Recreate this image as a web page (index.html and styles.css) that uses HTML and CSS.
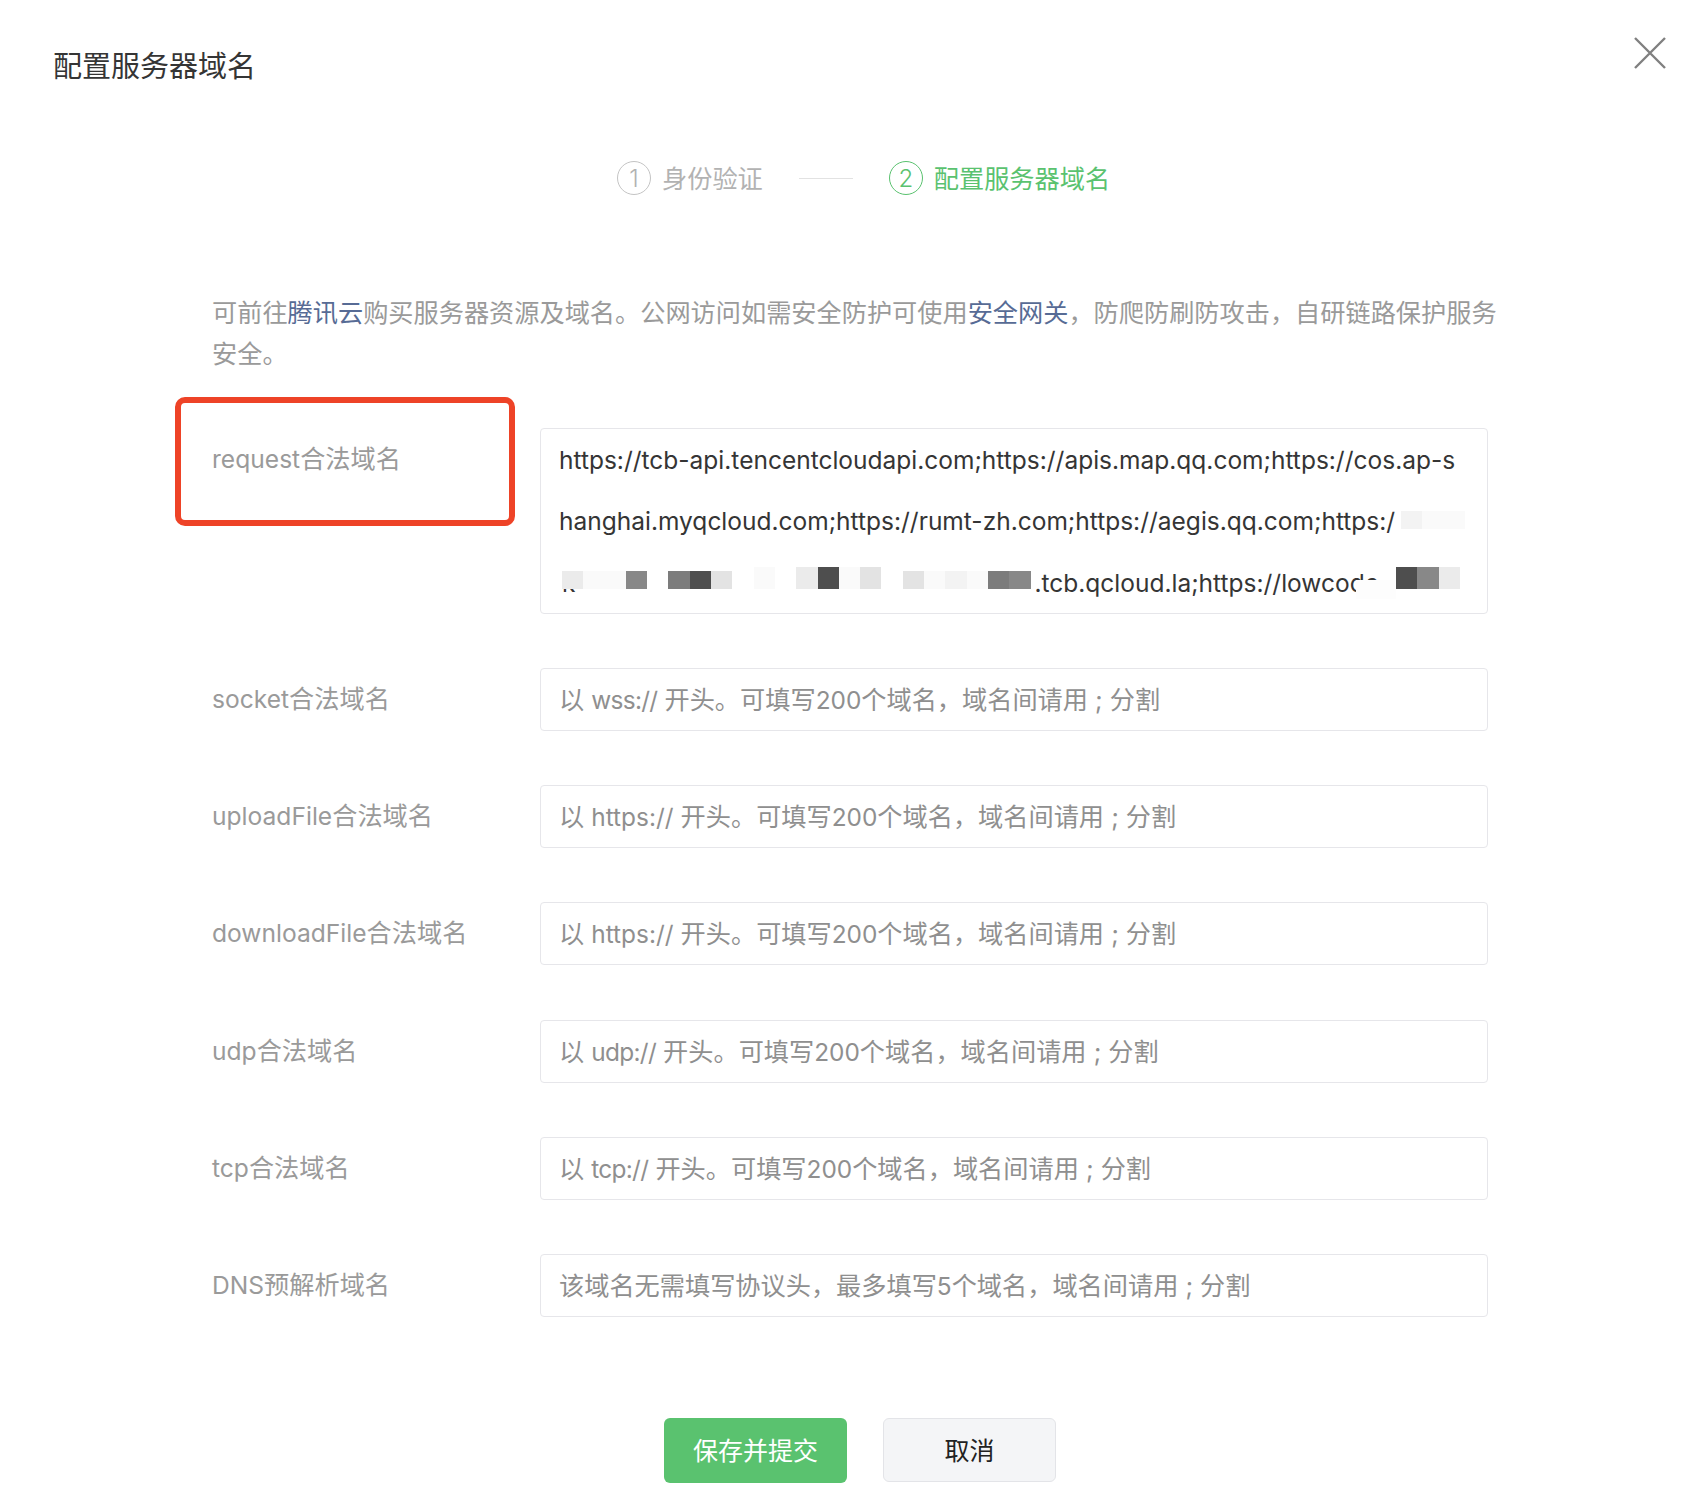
FILE: index.html
```html
<!DOCTYPE html>
<html lang="zh-CN">
<head>
  <meta charset="UTF-8">
  <title>配置服务器域名</title>
  <link rel="stylesheet" href="styles.css">
</head>
<body>
  <div class="dialog">
    <div class="dialog-header">
      <h1>配置服务器域名</h1>
      <svg class="close-icon" viewBox="0 0 32 32">
        <path d="M1 1 L31 31 M31 1 L1 31"></path>
      </svg>
    </div>

    <div class="steps">
      <div class="step">
        <span class="step-num">1</span>
        <span class="step-label">身份验证</span>
      </div>
      <span class="step-line"></span>
      <div class="step step-active">
        <span class="step-num">2</span>
        <span class="step-label">配置服务器域名</span>
      </div>
    </div>

    <p class="desc">可前往<a href="#">腾讯云</a>购买服务器资源及域名。公网访问如需安全防护可使用<a href="#">安全网关</a>，防爬防刷防攻击，自研链路保护服务安全。</p>

    <div class="form">
      <div class="form-row">
        <label class="form-label"><span class="lat">request</span>合法域名</label>
        <div class="form-value">
          <div class="value-line">https://tcb-api.tencentcloudapi.com;https://apis.map.qq.com;https://cos.ap-s</div>
          <div class="value-line">hanghai.myqcloud.com;https://rumt-zh.com;https://aegis.qq.com;https:/</div>
          <div class="value-line"><span class="value-head">k</span><span class="value-tail">.tcb.qcloud.la;https://lowcode</span></div>
          <div class="mosaic mosaic-left">
            <i class="s1"></i><i class="s2"></i><i class="s2"></i><i class="s3"></i><i></i><i class="s4"></i><i class="s5"></i><i class="s6"></i><i></i><i class="s2 tall"></i><i></i><i class="s1 tall"></i><i class="s5 tall"></i><i class="s2 tall"></i><i class="s6 tall"></i><i></i><i class="s6"></i><i class="s2"></i><i class="s7"></i><i class="s2"></i><i class="s4"></i><i class="s3"></i>
          </div>
          <div class="mosaic mosaic-mid">
            <i class="s7"></i><i class="s2"></i><i class="s2"></i>
          </div>
          <div class="mosaic mosaic-right">
            <i class="s5 tall"></i><i class="s3 tall"></i><i class="s1 tall"></i>
          </div>
          <div class="smudge"></div>
        </div>
        <div class="highlight-box"></div>
      </div>

      <div class="form-row">
        <label class="form-label"><span class="lat">socket</span>合法域名</label>
        <div class="form-input">以 <span class="lat tight">wss://</span> 开头。可填写<span class="lat">200</span>个域名，域名间请用 ; 分割</div>
      </div>
      <div class="form-row">
        <label class="form-label"><span class="lat">uploadFile</span>合法域名</label>
        <div class="form-input">以 <span class="lat">https://</span> 开头。可填写<span class="lat">200</span>个域名，域名间请用 ; 分割</div>
      </div>
      <div class="form-row">
        <label class="form-label"><span class="lat">downloadFile</span>合法域名</label>
        <div class="form-input">以 <span class="lat">https://</span> 开头。可填写<span class="lat">200</span>个域名，域名间请用 ; 分割</div>
      </div>
      <div class="form-row">
        <label class="form-label"><span class="lat">udp</span>合法域名</label>
        <div class="form-input">以 <span class="lat tight">udp://</span> 开头。可填写<span class="lat">200</span>个域名，域名间请用 ; 分割</div>
      </div>
      <div class="form-row">
        <label class="form-label"><span class="lat">tcp</span>合法域名</label>
        <div class="form-input">以 <span class="lat tight">tcp://</span> 开头。可填写<span class="lat">200</span>个域名，域名间请用 ; 分割</div>
      </div>
      <div class="form-row">
        <label class="form-label"><span class="lat">DNS</span>预解析域名</label>
        <div class="form-input">该域名无需填写协议头，最多填写<span class="lat">5</span>个域名，域名间请用 ; 分割</div>
      </div>
    </div>

    <div class="actions">
      <button class="primary-btn">保存并提交</button>
      <button class="default-btn">取消</button>
    </div>
  </div>
</body>
</html>
```

FILE: styles.css
```css
body {
  margin: 0;
  background-color: #ffffff;
  font-family: Inter, "Noto Sans CJK SC", sans-serif;
  font-size: 25.2px;
  color: #353535;
}
.dialog {
  width: 1708px;
  height: 1500px;
  overflow: hidden;
}
.dialog-header {
  display: flex;
  justify-content: space-between;
  padding: 37px 42px 0 53px;
  height: 161px;
  box-sizing: border-box;
}
h1 {
  margin: 10px 0 0;
  font-size: 29px;
  line-height: 40px;
  font-weight: 400;
  color: #353535;
}
.close-icon {
  width: 32px;
  height: 32px;
  fill: none;
  stroke: #808080;
  stroke-width: 2.4;
}
.steps {
  display: flex;
  align-items: center;
  height: 34px;
  padding-left: 617px;
  color: #b2b2b2;
}
.step {
  display: flex;
  align-items: center;
  gap: 11px;
}
.step-label {
  margin-bottom: 2px;
}
.step-num {
  width: 34px;
  height: 34px;
  box-sizing: border-box;
  border: 1.5px solid #c4c4c4;
  border-radius: 50%;
  display: flex;
  align-items: center;
  justify-content: center;
  font-size: 24px;
  font-weight: 300;
}
.step-line {
  width: 54px;
  height: 1px;
  margin: 0 36px;
  background-color: #e2e2e2;
}
.step-active {
  color: #5ac26f;
}
.step-active .step-num {
  border-color: #5ac26f;
}
.desc {
  width: 1295px;
  margin: 98px 0 0 212px;
  line-height: 41px;
  color: #9a9a9a;
}
.desc a {
  color: #576b95;
  text-decoration: none;
}
.form {
  display: flex;
  flex-direction: column;
  gap: 54.2px;
  margin-top: 53px;
  padding-left: 212px;
}
.form-row {
  display: flex;
  position: relative;
}
.form-label {
  width: 328px;
  flex-shrink: 0;
  line-height: 63px;
  color: #9a9a9a;
}
.lat {
  font-size: 24.6px;
}
.form-value,
.form-input {
  width: 948px;
  box-sizing: border-box;
  border: 1px solid #e6e6ea;
  border-radius: 4px;
  padding: 0 18px;
}
.form-value {
  position: relative;
  color: #353535;
  font-size: 24.5px;
}
.value-line {
  height: 61.3px;
  line-height: 63px;
  white-space: nowrap;
  overflow: hidden;
}
.value-head {
  margin-left: 3px;
}
.value-tail {
  margin-left: 459px;
}
.form-input {
  height: 63px;
  line-height: 63px;
  color: #8f8f8f;
}
.form-input .lat {
  font-size: 24.4px;
}
.form-input .tight {
  letter-spacing: -0.7px;
}
.mosaic {
  position: absolute;
  display: flex;
  align-items: flex-end;
}
.mosaic i {
  width: 21.3px;
  height: 18px;
  flex-shrink: 0;
}
.mosaic i.tall {
  height: 22px;
}
.mosaic-left {
  left: 21px;
  bottom: 24px;
}
.mosaic-mid {
  left: 860px;
  bottom: 84px;
}
.mosaic-right {
  left: 855px;
  bottom: 24px;
}
.s1 { background-color: #ebebeb; }
.s2 { background-color: #fafafa; }
.s3 { background-color: #888888; }
.s4 { background-color: #7c7c7c; }
.s5 { background-color: #4e4e4e; }
.s6 { background-color: #e3e3e3; }
.s7 { background-color: #f3f3f3; }
.smudge {
  position: absolute;
  left: 815px;
  bottom: 14px;
  width: 40px;
  height: 19px;
  background-color: #fdfdfd;
}
.highlight-box {
  position: absolute;
  left: -37px;
  top: -31px;
  width: 340px;
  height: 129px;
  box-sizing: border-box;
  border: 6px solid #ee4327;
  border-radius: 10px;
}
.actions {
  display: flex;
  gap: 36px;
  margin-top: 101px;
  padding-left: 664px;
}
button {
  height: 65px;
  border: none;
  border-radius: 6px;
  font-family: inherit;
  font-size: 25px;
  padding: 0 0 3px;
}
.primary-btn {
  width: 183px;
  background-color: #5ac26f;
  color: #ffffff;
}
.default-btn {
  width: 173px;
  height: 64px;
  background-color: #f4f5f7;
  border: 1px solid #e3e4e8;
  color: #222222;
}
```
